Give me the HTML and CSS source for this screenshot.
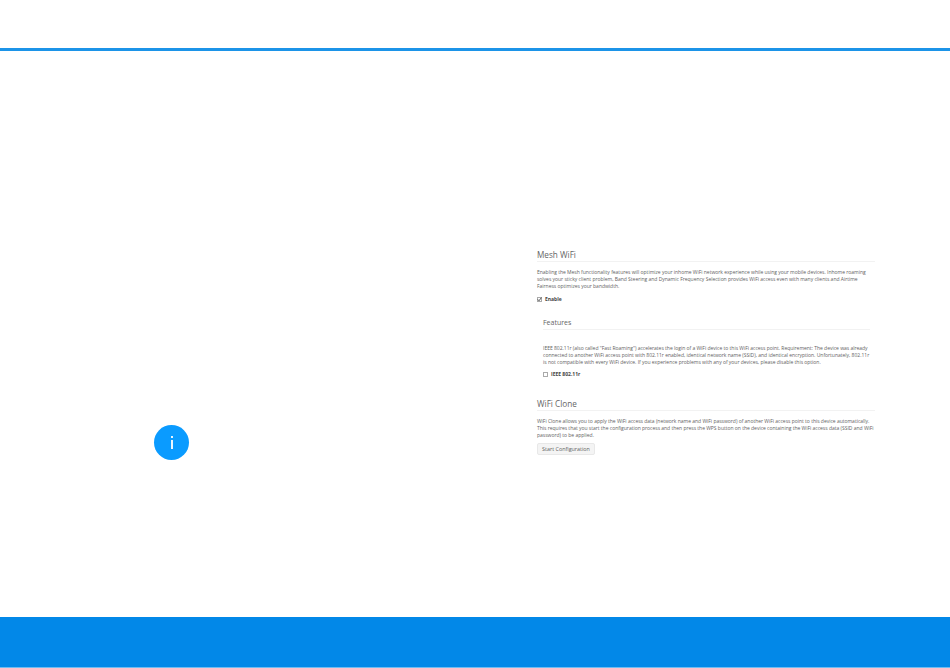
FILE: index.html
```html
<!DOCTYPE html>
<html lang="en">
<head>
    <meta charset="UTF-8">
    <meta name="viewport" content="width=device-width, initial-scale=1.0">
    <title>Mesh WiFi</title>
    <link rel="stylesheet" href="styles.css">
</head>
<body>
    <header class="top-rule"></header>

    <main class="page">
        <div class="note-col">
            <div class="info-badge">
                <svg width="8" height="16" viewBox="0 0 8 16">
                    <rect x="3" y="1" width="2" height="2" fill="#eaf6ff"/>
                    <rect x="3" y="5" width="2" height="9" fill="#eaf6ff"/>
                </svg>
            </div>
        </div>

        <div class="shot">
            <section class="block">
                <h2>Mesh WiFi</h2>
                <p>Enabling the Mesh functionality features will optimize your inhome WiFi network experience while using your mobile devices. Inhome roaming solves your sticky client problem, Band Steering and Dynamic Frequency Selection provides WiFi access even with many clients and Airtime Fairness optimizes your bandwidth.</p>
                <label class="check">
                    <span class="box">
                        <svg width="5" height="5" viewBox="0 0 5 5"><path d="M0.8 2.4 L2 3.8 L4.4 0.6" fill="none" stroke="#444" stroke-width="0.9"/></svg>
                    </span>
                    Enable
                </label>
            </section>

            <section class="block sub">
                <h3>Features</h3>
                <p>IEEE 802.11r (also called "Fast Roaming") accelerates the login of a WiFi device to this WiFi access point. Requirement: The device was already connected to another WiFi access point with 802.11r enabled, identical network name (SSID), and identical encryption. Unfortunately, 802.11r is not compatible with every WiFi device. If you experience problems with any of your devices, please disable this option.</p>
                <label class="check">
                    <span class="box"></span>
                    IEEE 802.11r
                </label>
            </section>

            <section class="block clone">
                <h2>WiFi Clone</h2>
                <p>WiFi Clone allows you to apply the WiFi access data (network name and WiFi password) of another WiFi access point to this device automatically. This requires that you start the configuration process and then press the WPS button on the device containing the WiFi access data (SSID and WiFi password) to be applied.</p>
                <button type="button">Start Configuration</button>
            </section>
        </div>
    </main>

    <footer class="bottom-band"></footer>
</body>
</html>
```

FILE: styles.css
```css
html, body {
    height: 100%;
}
body {
    font-family: "Open Sans", sans-serif;
    background-color: white;
    color: #444;
    margin: 0;
    padding: 0;
    display: flex;
    flex-direction: column;
    overflow: hidden;
}
.top-rule {
    height: 48px;
    border-bottom: 3px solid #1c94e8;
    flex: none;
}
.page {
    flex: 1;
    display: flex;
    min-height: 0;
}
.note-col {
    width: 537px;
    flex: none;
    padding: 374px 0 0 154px;
    box-sizing: border-box;
}
.info-badge {
    width: 35px;
    height: 35px;
    border-radius: 50%;
    background-color: #0a9bff;
    display: flex;
    align-items: center;
    justify-content: center;
}
.shot {
    width: 338px;
    padding-top: 199px;
}
h2, h3 {
    font-weight: 400;
    color: #666;
    border-bottom: 1px solid #f2f2f2;
    line-height: 10px;
    padding-bottom: 1px;
}
h2 {
    font-size: 8.2px;
    margin: 0 0 7px 0;
}
h3 {
    font-size: 7px;
    margin: 0 0 15px 0;
}
p {
    font-size: 5px;
    line-height: 7px;
    letter-spacing: -0.012px;
    margin: 0 -1px 6px 0;
    color: #5f5f5f;
}
.check {
    display: flex;
    align-items: center;
    gap: 3px;
    font-size: 5px;
    line-height: 7px;
    font-weight: 700;
}
.box {
    width: 5px;
    height: 5px;
    box-sizing: border-box;
    border: 0.5px solid #aaa;
    display: flex;
    align-items: center;
    justify-content: center;
}
.box svg {
    flex: none;
}
.block.sub {
    margin: 15px 0 0 6px;
    width: 327px;
}
.block.sub p {
    margin: 0 -2px 5px 0;
}
.block.clone {
    margin-top: 21px;
}
.block.clone p {
    margin-bottom: 4px;
}
button {
    display: block;
    font-family: "Open Sans", sans-serif;
    font-size: 5.4px;
    color: #5f5f5f;
    height: 12px;
    width: 58px;
    padding: 0;
    background-color: #f4f4f4;
    border: 1px solid #e8e8e8;
    border-radius: 2px;
}
.bottom-band {
    height: 50px;
    flex: none;
    background-color: #0288e8;
    border-bottom: 1px solid #6fbdf2;
}
```
